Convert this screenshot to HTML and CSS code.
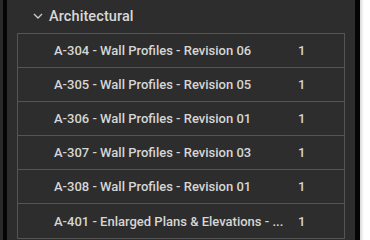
FILE: index.html
```html
<!DOCTYPE html>
<html>
<head>
<meta charset="utf-8">
<link rel="stylesheet" href="styles.css">
</head>
<body>
<div class="frame">
  <div class="edge-left"></div>
  <div class="edge-black"></div>
  <div class="panel">
    <div class="group-header">
      <svg class="chevron" width="10" height="6" viewBox="0 0 10 6"><path d="M1 1 L5 5 L9 1" fill="none" stroke="#c8c8c8" stroke-width="1.4"/></svg>
      <span class="group-title">Architectural</span>
    </div>
    <div class="table">
      <div class="row"><span class="name">A-304 - Wall Profiles - Revision 06</span><span class="count">1</span></div>
      <div class="row"><span class="name">A-305 - Wall Profiles - Revision 05</span><span class="count">1</span></div>
      <div class="row"><span class="name">A-306 - Wall Profiles - Revision 01</span><span class="count">1</span></div>
      <div class="row"><span class="name">A-307 - Wall Profiles - Revision 03</span><span class="count">1</span></div>
      <div class="row"><span class="name">A-308 - Wall Profiles - Revision 01</span><span class="count">1</span></div>
      <div class="row"><span class="name">A-401 - Enlarged Plans &amp; Elevations - ...</span><span class="count">1</span></div>
    </div>
  </div>
  <div class="edge-black-r"></div>
  <div class="edge-white"></div>
</div>
</body>
</html>
```
FILE: styles.css
```css
html, body {
  margin: 0;
  padding: 0;
  background: #2c2c2c;
  overflow: hidden;
}
.frame {
  display: flex;
  width: 370px;
  height: 240px;
  font-family: Roboto, "Liberation Sans", sans-serif;
}
.edge-left {
  width: 3px;
  background: #2a2a2a;
}
.edge-black {
  width: 4px;
  background: #050505;
}
.panel {
  flex: 1;
  background: #2d2d2d;
  display: flex;
  flex-direction: column;
  overflow: hidden;
}
.edge-black-r {
  width: 5px;
  background: #050505;
}
.edge-white {
  width: 10px;
  background: linear-gradient(to right, #d8d8d8, #ffffff 40%, #ffffff);
}
.group-header {
  height: 33px;
  display: flex;
  align-items: center;
  padding-left: 26px;
  box-sizing: border-box;
  padding-bottom: 1px;
}
.chevron {
  margin-right: 6px;
}
.group-title {
  color: #d8d8d8;
  font-size: 14.5px;
  font-weight: 500;
  letter-spacing: 0.1px;
}
.table {
  margin: 0 10px;
  border-left: 1.5px solid #555555;
  border-right: 1.5px solid #555555;
  border-top: 1.5px solid #555555;
}
.row {
  display: flex;
  align-items: center;
  height: 33.1px;
  border-bottom: 1.5px solid #555555;
  color: #d6d6d6;
  font-size: 13px;
  font-weight: 500;
}
.name {
  padding-left: 36px;
  width: 234px;
  white-space: nowrap;
}
.count {
  margin-left: 10px;
}
```
